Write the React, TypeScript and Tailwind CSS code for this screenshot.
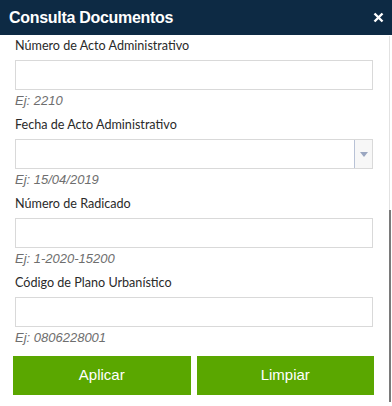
const fields = [
  { label: "Número de Acto Administrativo", hint: "Ej: 2210", select: false },
  { label: "Fecha de Acto Administrativo", hint: "Ej: 15/04/2019", select: true },
  { label: "Número de Radicado", hint: "Ej: 1-2020-15200", select: false },
  { label: "Código de Plano Urbanístico", hint: "Ej: 0806228001", select: false },
];

const Field = ({ label, hint, select }: { label: string; hint: string; select: boolean }) => (
  <div className="flex flex-col">
    <label className="text-[12.6px] leading-[18px] text-[#2a2a2a] font-['Lato',sans-serif] h-[18px]">{label}</label>
    <div className="mt-[5px] h-[30px] border border-[#d9d9d9] bg-white flex">
      <input className="flex-1 outline-none px-2 text-sm" />
      {select && (
        <div className="w-[18px] border-l border-[#b8c2d6] bg-[#f7f7f7] flex items-center justify-center">
          <svg width="8" height="5" viewBox="0 0 8 5">
            <path d="M0 0h8L4 5z" fill="#9aa6c0" />
          </svg>
        </div>
      )}
    </div>
    <span className="mt-[2px] text-[13px] leading-[18px] italic text-[#6e6e6e] font-['Liberation_Sans',sans-serif]">{hint}</span>
  </div>
);

export default function App() {
  return (
    <div className="w-[392px] h-[406px] bg-white flex flex-col relative overflow-hidden">
      <div className="h-[35px] bg-[#0d2a44] flex items-center justify-between pl-[9px] pr-[8px] shrink-0">
        <span className="text-white font-bold text-[16px] font-['Liberation_Sans',sans-serif] tracking-[-0.3px]">Consulta Documentos</span>
        <svg width="11" height="11" viewBox="0 0 11 11">
          <path d="M1.5 1.5l8 8M9.5 1.5l-8 8" stroke="white" strokeWidth="2.4" />
        </svg>
      </div>
      <div className="flex-1 flex">
        <div className="flex-1 flex flex-col pl-[15px] pr-[16px] pt-[2px] gap-[6px]">
          {fields.map((f) => (
            <Field key={f.label} {...f} />
          ))}
          <div className="flex gap-[6px] mt-[3px] -ml-[2px] -mr-[1px]">
            <button className="flex-1 h-[39px] bg-[#5aa700] text-white text-[15px] font-['Liberation_Sans',sans-serif]">Aplicar</button>
            <button className="flex-1 h-[39px] bg-[#5aa700] text-white text-[15px] font-['Liberation_Sans',sans-serif]">Limpiar</button>
          </div>
        </div>
        <div className="w-[3px] flex flex-col pt-[1px] pb-[4px]">
          <div className="h-[174px] w-[1px] bg-[#e2e2e2]" />
          <div className="flex-1 w-[2px] bg-[#7a7a7a]" />
        </div>
      </div>
    </div>
  );
}
